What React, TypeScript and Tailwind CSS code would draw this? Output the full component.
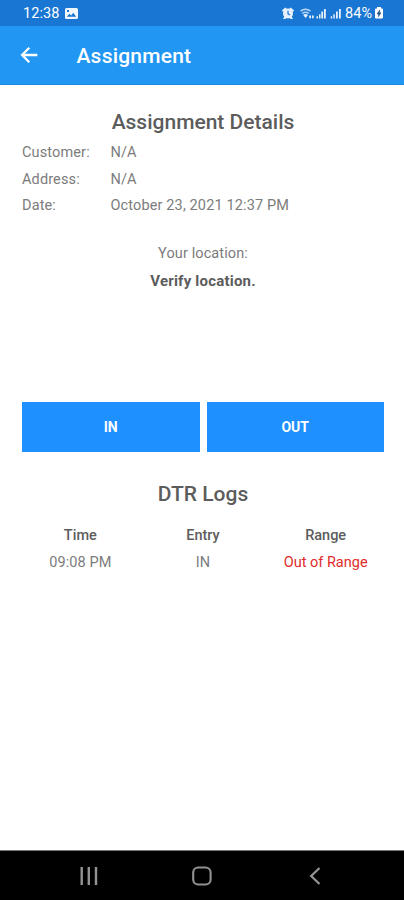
import React from "react";

function StatusBar() {
  return (
    <div className="flex h-[26px] items-center justify-between bg-[#1976d2] pl-[23px] pr-[20px] text-white">
      <div className="flex items-center gap-[5px]">
        <span className="pt-[2px] text-[14.5px] leading-[26px] tracking-[0.1px]">12:38</span>
        <svg width="13" height="11" viewBox="0 0 13 11">
          <rect width="13" height="11" rx="1.5" fill="#f1f7ff" />
          <path d="M1.7 8.8 4.4 5.8l1.8 1.8 2-2.8 3 4z" fill="#1976d2" />
          <rect x="2" y="2" width="2" height="2" fill="#1976d2" />
        </svg>
      </div>
      <div className="flex items-center">
        <svg width="62" height="13" viewBox="0 0 62 13" fill="#e6f1fd">
          <circle cx="6" cy="6.5" r="5" />
          <path d="M0 3.2 3.4.5l1.4 1.6L1 5zM12 3.2 8.6.5 7.2 2.1 11 5zM1 12l1.7-3 1.9 1.4L3.4 12zM11 12 9.3 9l-1.9 1.4L8.6 12z" />
          <path d="M6 3.8v3l2 1.2" fill="none" stroke="#1976d2" strokeWidth="1.2" />
          <g fill="none" stroke="#b9d7f5" strokeWidth="1.5">
            <path d="M18.5 4.2q5-4 10 0M20.3 6.5q3.2-2.5 6.4 0" />
          </g>
          <path d="m21.2 8 2.4 3L26 8q-2.4-1.8-4.8 0zM27.2 8.5H29v2.8h-1.8zM30 8.5h1.7v2.8H30z" />
          <path d="M34.5 9.2H36v2.3h-1.5zM37 7.3h1.5v4.2H37zM39.3 4.6h1.8v6.9h-1.8zM42 2h1.8v9.5H42z" />
          <path d="M48.7 9.2h1.5v2.3h-1.5zM51.3 7.3h1.5v4.2h-1.5zM54 4.6h1.8v6.9H54zM57 2h1.8v9.5H57z" />
        </svg>
        <span className="ml-px pt-[2px] text-[14.5px] leading-[26px]">84%</span>
        <svg className="ml-[2px]" width="10" height="12" viewBox="0 0 10 12">
          <path d="M3 0h4v1.5h1q1 0 1 1v8q0 1-1 1H2q-1 0-1-1v-8q0-1 1-1h1z" fill="#fff" />
          <path d="M5.8 3 3 7h1.8l-.4 2.7L7 5.8H5.3z" fill="#214f85" stroke="#214f85" strokeWidth=".6" />
        </svg>
      </div>
    </div>
  );
}

function AppBar() {
  return (
    <header className="flex h-[59px] items-center border-b border-[#1e88e5] bg-[#2196f3] text-white">
      <svg className="ml-[20px]" width="18" height="18" viewBox="0 0 18 18" fill="none" stroke="white" strokeWidth="2.3">
        <path d="M17.3 9H2.4M9.3 1.8 2.1 9l7.2 7.2" />
      </svg>
      <h1 className="ml-[38.5px] pt-[2px] text-[21px] font-medium leading-[28px] tracking-[0.2px]">Assignment</h1>
    </header>
  );
}

const details = [
  ["Customer:", "N/A"],
  ["Address:", "N/A"],
  ["Date:", "October 23, 2021 12:37 PM"],
];

export default function App() {
  return (
    <div className="flex h-[900px] w-[404px] flex-col overflow-hidden bg-white font-['Roboto',sans-serif] text-[14.5px] text-[#7c7c7c]">
      <StatusBar />
      <AppBar />
      <main className="flex-1 pl-[22px] pr-[20px] pt-[22px]">
        <h2 className="text-center text-[21px] font-medium leading-[30px] text-[#5c5c5c]">Assignment Details</h2>
        <dl className="pt-[3px]">
          {details.map(([label, value]) => (
            <div key={label} className="flex h-[26.5px] items-center tracking-[0.13px]">
              <dt className="w-[88.5px]">{label}</dt>
              <dd>{value}</dd>
            </div>
          ))}
        </dl>
        <div className="mt-[20px] text-center">
          <p className="leading-[27px] tracking-[0.1px]">Your location:</p>
          <p className="text-[15px] font-bold leading-[28px] tracking-[0.2px] text-[#5c5c5c]">Verify location.</p>
        </div>
        <div className="mt-[107px] grid grid-cols-2 gap-[7px] text-[14px] font-bold text-white">
          <button className="h-[50.5px] bg-[#1e90ff] pt-[2px]">IN</button>
          <button className="h-[50.5px] bg-[#1e90ff] pt-[2px]">OUT</button>
        </div>
        <h2 className="mt-[27px] text-center text-[21px] font-medium leading-[30px] text-[#5c5c5c]">DTR Logs</h2>
        <div className="-mx-[3px] mt-[12.5px] grid grid-cols-3 text-center leading-[27px]">
          <span className="font-medium text-[#5c5c5c]">Time</span>
          <span className="font-medium text-[#5c5c5c]">Entry</span>
          <span className="font-medium text-[#5c5c5c]">Range</span>
          <span className="tracking-[0.1px]">09:08 PM</span>
          <span>IN</span>
          <span className="text-[#e02a2a]">Out of Range</span>
        </div>
      </main>
      <nav className="h-[50px] border-t border-[#777] bg-black">
        <svg width="404" height="49" viewBox="0 0 404 49" fill="none" stroke="#929292">
          <path d="M81.7 16v18M88.8 16v18M96 16v18" strokeWidth="2.4" />
          <rect x="193.2" y="16.5" width="17.4" height="17" rx="5" strokeWidth="2.1" />
          <path d="m319.5 17-8.3 8 8.3 8" strokeWidth="2.3" />
        </svg>
      </nav>
    </div>
  );
}
